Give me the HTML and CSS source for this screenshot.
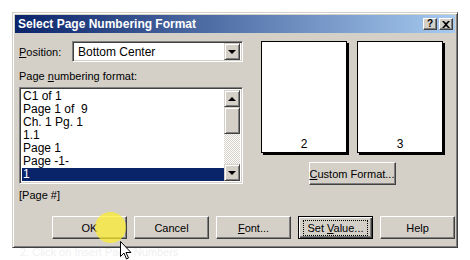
FILE: index.html
```html
<!DOCTYPE html>
<html lang="en">
<head>
    <meta charset="UTF-8">
    <title>Select Page Numbering Format</title>
    <link rel="stylesheet" href="styles.css">
</head>
<body>
    <div class="dialog">
        <div class="titlebar">
            <span class="title">Select Page Numbering Format</span>
            <div class="title-buttons">
                <span class="tbtn">?</span>
                <span class="tbtn close">
                    <svg width="8" height="7" viewBox="0 0 8 7"><path d="M0 0h2l2 2 2-2h2L5 3.5 8 7H6L4 5 2 7H0l3-3.5z" fill="#000"/></svg>
                </span>
            </div>
        </div>

        <div class="content">
            <div class="left">
                <div class="field-row">
                    <label class="lbl"><u>P</u>osition:</label>
                    <div class="combo">
                        <span class="combo-text">Bottom Center</span>
                        <span class="arrow-btn"><span class="tri-down"></span></span>
                    </div>
                </div>
                <label class="lbl list-lbl">Page <u>n</u>umbering format:</label>
                <div class="listbox">
                    <ul class="items">
                        <li>C1 of 1</li>
                        <li>Page 1 of &nbsp;9</li>
                        <li>Ch. 1 Pg. 1</li>
                        <li>1.1</li>
                        <li>Page 1</li>
                        <li>Page -1-</li>
                        <li class="selected">1</li>
                    </ul>
                    <div class="scrollbar">
                        <span class="arrow-btn sq"><span class="tri-up"></span></span>
                        <span class="thumb"></span>
                        <span class="track"></span>
                        <span class="arrow-btn sq"><span class="tri-down"></span></span>
                    </div>
                </div>
                <div class="code">[Page #]</div>
            </div>

            <div class="right">
                <div class="pages">
                    <div class="page"><span>2</span></div>
                    <div class="page"><span>3</span></div>
                </div>
                <button class="btn custom"><u>C</u>ustom Format...</button>
            </div>
        </div>

        <div class="buttons">
            <button class="btn">OK</button>
            <button class="btn">Cancel</button>
            <button class="btn"><u>F</u>ont...</button>
            <button class="btn focused"><span class="focus">Set <u>V</u>alue...</span></button>
            <button class="btn">Help</button>
        </div>
    </div>

    <div class="under">2. Click on Insert Page Numbers</div>

    <div class="highlight"></div>
    <svg class="cursor" width="13" height="20" viewBox="0 0 13 20">
        <path d="M0.5 0.5v15l3.5-3.5 2.5 6 2-1-2.5-5.5h5z" fill="#fff" stroke="#000" stroke-width="1"/>
    </svg>
</body>
</html>
```

FILE: styles.css
```css
body {
    margin: 0;
    width: 470px;
    height: 260px;
    background-color: #ffffff;
    font-family: "Liberation Sans", Arial, sans-serif;
    font-size: 11px;
    color: #000;
    position: relative;
    overflow: hidden;
}

.dialog {
    position: relative;
    margin: 12px 0 0 12px;
    width: 446px;
    height: 236px;
    box-sizing: border-box;
    background-color: #d4d0c8;
    border: 1px solid;
    border-color: #d4d0c8 #404040 #404040 #d4d0c8;
    box-shadow: inset 1px 1px #ffffff, inset -1px -1px #808080;
    padding: 2px;
}

.titlebar {
    height: 18px;
    display: flex;
    align-items: center;
    justify-content: space-between;
    padding: 0 2px 0 3px;
    background: linear-gradient(to right, #0a246a, #a6caf0);
}

.title {
    color: #fff;
    font-weight: bold;
    font-size: 12px;
}

.title-buttons {
    display: flex;
    gap: 2px;
}

.tbtn {
    width: 14px;
    height: 12px;
    box-sizing: border-box;
    background-color: #d4d0c8;
    border: 1px solid;
    border-color: #fff #404040 #404040 #fff;
    box-shadow: inset -1px -1px #808080;
    display: flex;
    align-items: center;
    justify-content: center;
    font-weight: bold;
    font-size: 10px;
    line-height: 1;
}

.content {
    display: flex;
    padding: 8px 0 0 4px;
}

.left {
    width: 224px;
    display: flex;
    flex-direction: column;
}

.field-row {
    display: flex;
    align-items: center;
    justify-content: space-between;
}

.combo {
    width: 171px;
    height: 21px;
    box-sizing: border-box;
    background-color: #fff;
    border: 1px solid;
    border-color: #808080 #fff #fff #808080;
    box-shadow: inset 1px 1px #404040, inset -1px -1px #d4d0c8;
    display: flex;
    align-items: center;
    padding: 2px;
}

.combo-text {
    flex: 1;
    padding-left: 3px;
    font-size: 12px;
}

.arrow-btn {
    width: 16px;
    height: 17px;
    box-sizing: border-box;
    background-color: #d4d0c8;
    border: 1px solid;
    border-color: #d4d0c8 #404040 #404040 #d4d0c8;
    box-shadow: inset 1px 1px #fff, inset -1px -1px #808080;
    display: flex;
    align-items: center;
    justify-content: center;
}

.tri-down {
    width: 0;
    height: 0;
    border-left: 4px solid transparent;
    border-right: 4px solid transparent;
    border-top: 4px solid #000;
}

.tri-up {
    width: 0;
    height: 0;
    border-left: 4px solid transparent;
    border-right: 4px solid transparent;
    border-bottom: 4px solid #000;
}

.list-lbl {
    margin-top: 8px;
}

.listbox {
    margin-top: 5px;
    height: 97px;
    box-sizing: border-box;
    background-color: #fff;
    border: 1px solid;
    border-color: #808080 #fff #fff #808080;
    box-shadow: inset 1px 1px #404040, inset -1px -1px #d4d0c8;
    display: flex;
    padding: 2px;
    overflow: hidden;
}

.items {
    list-style: none;
    margin: 0;
    padding: 0;
    flex: 1;
    font-size: 12px;
}

.items li {
    height: 13px;
    line-height: 13px;
    padding-left: 1px;
}

.items li.selected {
    background-color: #0a246a;
    color: #fff;
}

.scrollbar {
    width: 16px;
    display: flex;
    flex-direction: column;
}

.thumb {
    height: 27px;
    box-sizing: border-box;
    background-color: #d4d0c8;
    border: 1px solid;
    border-color: #d4d0c8 #404040 #404040 #d4d0c8;
    box-shadow: inset 1px 1px #fff, inset -1px -1px #808080;
}

.track {
    flex: 1;
    background: repeating-conic-gradient(#fff 0 25%, #d4d0c8 0 50%) 0 0 / 2px 2px;
}

.code {
    margin-top: 5px;
}

.right {
    display: flex;
    flex-direction: column;
    align-items: center;
    margin-left: 18px;
}

.pages {
    display: flex;
    gap: 10px;
}

.page {
    width: 86px;
    height: 112px;
    box-sizing: border-box;
    background-color: #fff;
    border: 1px solid #000;
    box-shadow: 2px 2px #000;
    display: flex;
    align-items: flex-end;
    justify-content: center;
    padding-bottom: 1px;
    font-size: 12px;
}

.btn {
    width: 75px;
    height: 23px;
    box-sizing: border-box;
    background-color: #d4d0c8;
    border: 1px solid;
    border-color: #fff #404040 #404040 #fff;
    box-shadow: inset -1px -1px #808080;
    font-family: "Liberation Sans", Arial, sans-serif;
    font-size: 11px;
    color: #000;
    padding: 0;
    white-space: nowrap;
}

.btn.custom {
    width: 87px;
    margin-top: 9px;
}

.btn.focused {
    border: 1px solid #000;
    box-shadow: inset 1px 1px #fff, inset -1px -1px #404040, inset -2px -2px #808080;
}

.focus {
    display: inline-block;
    outline: 1px dotted #000;
    padding: 1px 3px;
}

.buttons {
    display: flex;
    gap: 7px;
    padding-left: 37px;
    margin-top: 15px;
}

.under {
    position: absolute;
    left: 20px;
    top: 246px;
    color: #f0f0f0;
    font-size: 11px;
}

.highlight {
    position: absolute;
    left: 95px;
    top: 212px;
    width: 31px;
    height: 31px;
    border-radius: 50%;
    background-color: rgba(255, 240, 40, 0.7);
}

.cursor {
    position: absolute;
    left: 120px;
    top: 241px;
}
```
